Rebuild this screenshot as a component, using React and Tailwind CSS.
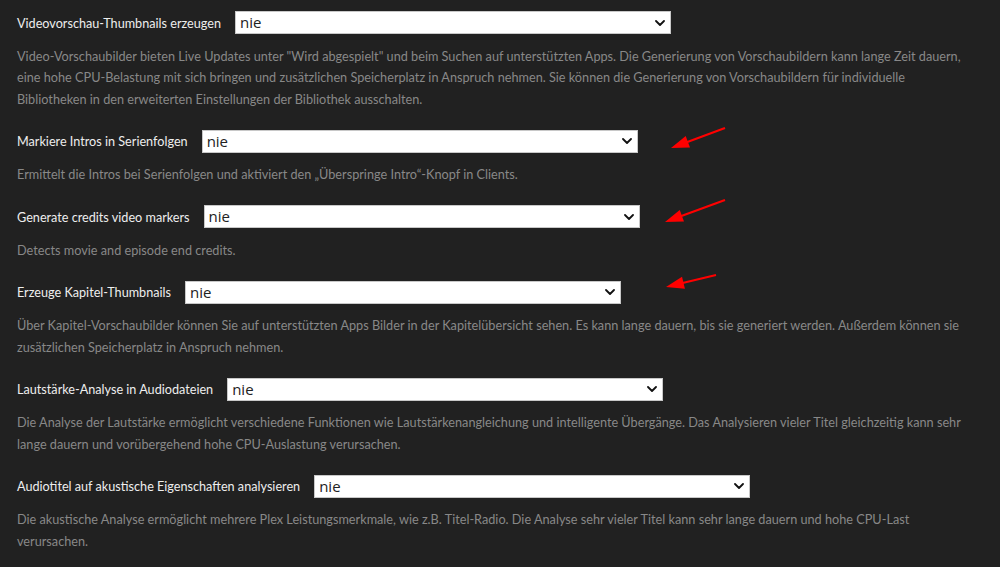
import React from "react";

const settings = [
  {
    label: "Videovorschau-Thumbnails erzeugen",
    text: "Video-Vorschaubilder bieten Live Updates unter \"Wird abgespielt\" und beim Suchen auf unterstützten Apps. Die Generierung von Vorschaubildern kann lange Zeit dauern, eine hohe CPU-Belastung mit sich bringen und zusätzlichen Speicherplatz in Anspruch nehmen. Sie können die Generierung von Vorschaubildern für individuelle Bibliotheken in den erweiterten Einstellungen der Bibliothek ausschalten.",
  },
  {
    label: "Markiere Intros in Serienfolgen",
    text: "Ermittelt die Intros bei Serienfolgen und aktiviert den „Überspringe Intro“-Knopf in Clients.",
  },
  {
    label: "Generate credits video markers",
    text: "Detects movie and episode end credits.",
  },
  {
    label: "Erzeuge Kapitel-Thumbnails",
    text: "Über Kapitel-Vorschaubilder können Sie auf unterstützten Apps Bilder in der Kapitelübersicht sehen. Es kann lange dauern, bis sie generiert werden. Außerdem können sie zusätzlichen Speicherplatz in Anspruch nehmen.",
  },
  {
    label: "Lautstärke-Analyse in Audiodateien",
    text: "Die Analyse der Lautstärke ermöglicht verschiedene Funktionen wie Lautstärkenangleichung und intelligente Übergänge. Das Analysieren vieler Titel gleichzeitig kann sehr lange dauern und vorübergehend hohe CPU-Auslastung verursachen.",
  },
  {
    label: "Audiotitel auf akustische Eigenschaften analysieren",
    text: "Die akustische Analyse ermöglicht mehrere Plex Leistungsmerkmale, wie z.B. Titel-Radio. Die Analyse sehr vieler Titel kann sehr lange dauern und hohe CPU-Last verursachen.",
  },
];

// red annotation arrows: [tail x, tail y, tip x, tip y]
const arrows = [
  [725, 128, 671, 148],
  [725, 200, 665, 222],
  [716, 275, 666, 287],
];

function Select() {
  return (
    <div className="ml-[14px] flex h-[23px] w-[436px] items-center justify-between border border-[#c8c8c8] bg-white pl-[4px] pr-[5px] font-['Open_Sans',sans-serif] text-[15px] text-[#222]">
      <span>nie</span>
      <svg width="10" height="6" viewBox="0 0 10 6" fill="none">
        <path d="M1 1l4 4 4-4" stroke="#111" strokeWidth="1.8" strokeLinecap="round" strokeLinejoin="round" />
      </svg>
    </div>
  );
}

function Arrow({ x1, y1, x2, y2 }) {
  const a = Math.atan2(y1 - y2, x1 - x2);
  const len = 19;
  const w = 0.33;
  const p1 = [x2 + len * Math.cos(a + w), y2 + len * Math.sin(a + w)];
  const p2 = [x2 + len * Math.cos(a - w), y2 + len * Math.sin(a - w)];
  const bx = x2 + (len - 3) * Math.cos(a);
  const by = y2 + (len - 3) * Math.sin(a);
  return (
    <g>
      <line x1={x1} y1={y1} x2={bx} y2={by} stroke="#f00" strokeWidth="2.2" />
      <polygon points={`${x2},${y2} ${p1[0]},${p1[1]} ${p2[0]},${p2[1]}`} fill="#f00" />
    </g>
  );
}

export default function App() {
  return (
    <div className="relative h-[567px] w-[1000px] overflow-hidden bg-[#212121] px-[17px] pt-[11px] font-['Lato',sans-serif]">
      <div className="flex w-[955px] flex-col gap-[19.6px]">
        {settings.map((s) => (
          <div key={s.label}>
            <div className="flex items-center">
              <span className="pt-[3px] text-[12.65px] text-[#eeeeee]">{s.label}</span>
              <Select />
            </div>
            <p className="mt-[11.5px] text-[12.7px] leading-[21.5px] text-[#888888]">{s.text}</p>
          </div>
        ))}
      </div>
      <svg className="pointer-events-none absolute left-0 top-0" width="1000" height="567">
        {arrows.map(([x1, y1, x2, y2], i) => (
          <Arrow key={i} x1={x1} y1={y1} x2={x2} y2={y2} />
        ))}
      </svg>
    </div>
  );
}
